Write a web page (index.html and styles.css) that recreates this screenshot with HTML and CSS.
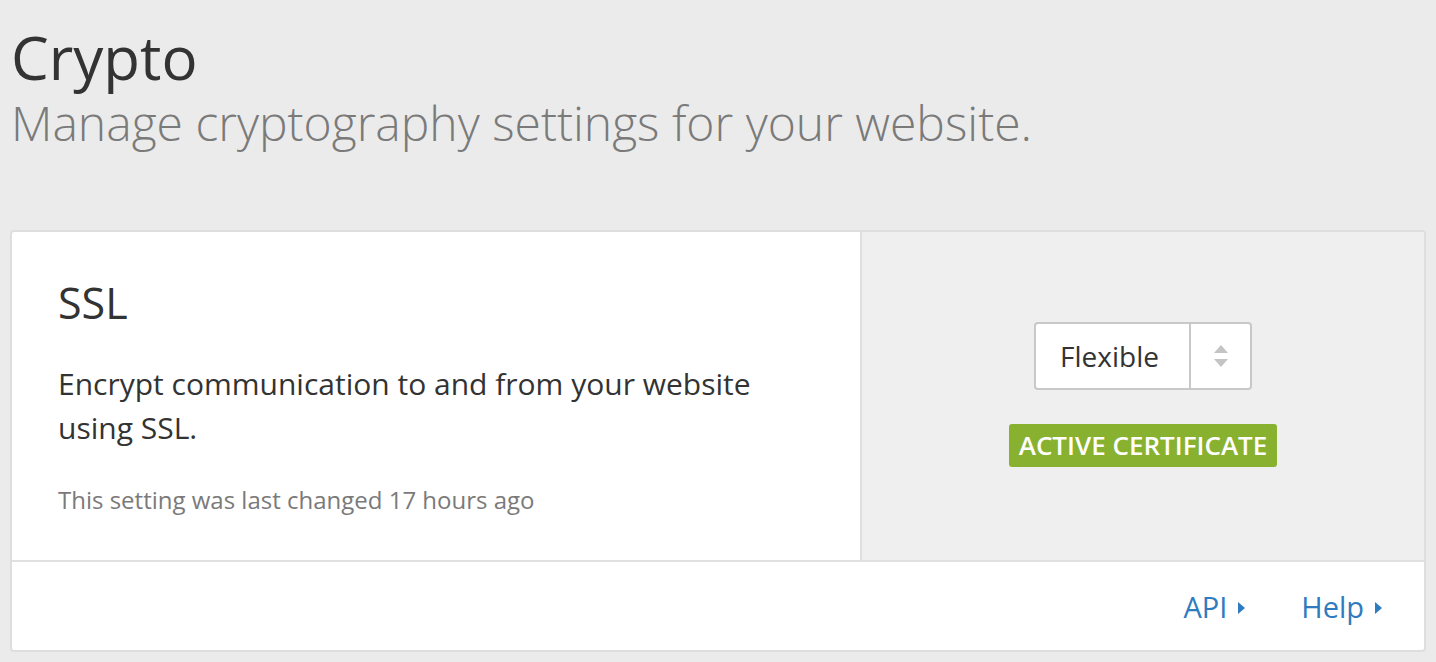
FILE: index.html
```html
<!DOCTYPE html>
<html>
<head>
<meta charset="utf-8">
<link rel="stylesheet" href="styles.css">
</head>
<body>
<div class="page">
  <header class="head">
    <h1 class="title">Crypto</h1>
    <p class="subtitle">Manage cryptography settings for your website.</p>
  </header>
  <section class="card">
    <div class="card-main">
      <div class="card-info">
        <h2 class="card-title">SSL</h2>
        <p class="card-desc">Encrypt communication to and from your website using SSL.</p>
        <p class="card-note">This setting was last changed 17 hours ago</p>
      </div>
      <div class="card-control">
        <div class="select">
          <span class="select-value">Flexible</span>
          <span class="select-arrows">
            <svg width="16" height="26" viewBox="0 0 16 26"><path d="M8 2 L15 10 L1 10 Z" fill="#c4c4c4"/><path d="M1 16 L15 16 L8 24 Z" fill="#c4c4c4"/></svg>
          </span>
        </div>
        <span class="badge">ACTIVE CERTIFICATE</span>
      </div>
    </div>
    <div class="card-foot">
      <a class="link">API <svg class="caret" width="7" height="12" viewBox="0 0 7 12"><path d="M0 0 L7 6 L0 12 Z" fill="#2f7bbf"/></svg></a>
      <a class="link">Help <svg class="caret" width="7" height="12" viewBox="0 0 7 12"><path d="M0 0 L7 6 L0 12 Z" fill="#2f7bbf"/></svg></a>
    </div>
  </section>
</div>
</body>
</html>
```
FILE: styles.css
```css
* { box-sizing: border-box; }
html, body { margin: 0; padding: 0; }
body {
  background: #ebebeb;
  font-family: "Open Sans", "Liberation Sans", sans-serif;
  color: #333;
}
.page {
  padding: 18px 10px 0 10px;
}
.head { padding-left: 1px; }
.title {
  margin: 0;
  font-size: 60px;
  font-weight: 400;
  line-height: 78px;
  color: #333;
}
.subtitle {
  margin: 0;
  font-size: 48px;
  font-weight: 300;
  line-height: 54px;
  color: #7a7a7a;
}
.card {
  margin-top: 80px;
  background: #fff;
  border: 2px solid #dedede;
  border-radius: 4px;
  width: 1416px;
  height: 422px;
  display: flex;
  flex-direction: column;
}
.card-main {
  display: flex;
  height: 330px;
  border-bottom: 2px solid #e0e0e0;
}
.card-info {
  width: 850px;
  padding: 43px 90px 0 46px;
  border-right: 2px solid #e0e0e0;
}
.card-title {
  margin: 0;
  font-size: 43px;
  font-weight: 400;
  line-height: 56px;
  color: #333;
}
.card-desc {
  margin: 31px 0 0 0;
  font-size: 30px;
  line-height: 44px;
  color: #333;
}
.card-note {
  margin: 34px 0 0 0;
  font-size: 24px;
  line-height: 32px;
  color: #7a7a7a;
  white-space: nowrap;
}
.card-control {
  flex: 1;
  background: #efefef;
  display: flex;
  flex-direction: column;
  align-items: center;
  padding-top: 90px;
}
.select {
  display: flex;
  width: 218px;
  height: 68px;
  background: #fff;
  border: 2px solid #c8c8c8;
  border-radius: 4px;
}
.select-value {
  width: 155px;
  display: flex;
  align-items: center;
  justify-content: center;
  padding-right: 6px;
  font-size: 28px;
  color: #333;
  border-right: 2px solid #c8c8c8;
}
.select-arrows {
  flex: 1;
  display: flex;
  align-items: center;
  justify-content: center;
}
.badge {
  margin-top: 34px;
  background: #88b12f;
  color: #fff;
  font-size: 26px;
  font-weight: 600;
  line-height: 43px;
  padding: 0 10px;
  border-radius: 3px;
}
.card-foot {
  flex: 1;
  display: flex;
  justify-content: flex-end;
  align-items: center;
  gap: 56px;
  padding-right: 42px;
}
.link {
  color: #2f7bbf;
  font-size: 29px;
  display: flex;
  align-items: center;
  gap: 11px;
}
.caret { margin-top: 3px; }
```
